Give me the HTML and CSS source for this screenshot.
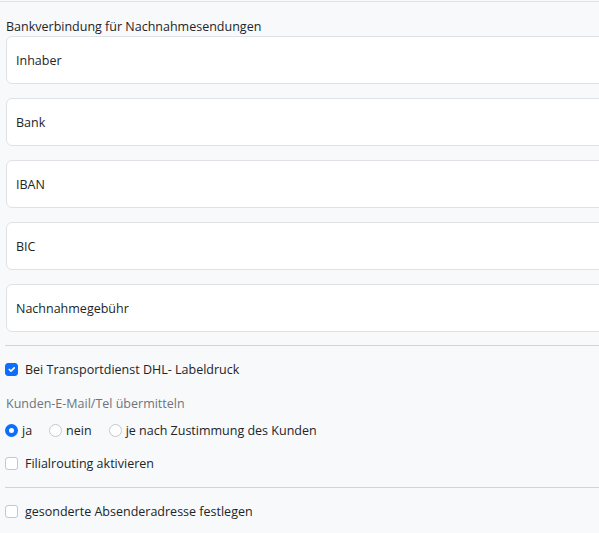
FILE: index.html
```
<!DOCTYPE html>
<html lang="de">
<head>
    <meta charset="UTF-8">
    <meta name="viewport" content="width=device-width, initial-scale=1.0">
    <title>Versandeinstellungen</title>
    <link rel="stylesheet" href="styles.css">
</head>
<body>
    <div class="panel">
        <div class="title">Bankverbindung für Nachnahmesendungen</div>
        <div class="field"><input type="text" placeholder="Inhaber"></div>
        <div class="field"><input type="text" placeholder="Bank"></div>
        <div class="field"><input type="text" placeholder="IBAN"></div>
        <div class="field"><input type="text" placeholder="BIC"></div>
        <div class="field last"><input type="text" placeholder="Nachnahmegebühr"></div>

        <hr>

        <label class="check first">
            <input type="checkbox" checked>
            <span>Bei Transportdienst DHL- Labeldruck</span>
        </label>

        <div class="muted">Kunden-E-Mail/Tel übermitteln</div>
        <div class="radios">
            <label class="check"><input type="radio" name="kontakt" checked><span>ja</span></label>
            <label class="check"><input type="radio" name="kontakt"><span>nein</span></label>
            <label class="check"><input type="radio" name="kontakt"><span>je nach Zustimmung des Kunden</span></label>
        </div>

        <label class="check routing">
            <input type="checkbox">
            <span>Filialrouting aktivieren</span>
        </label>

        <hr>

        <label class="check first">
            <input type="checkbox">
            <span>gesonderte Absenderadresse festlegen</span>
        </label>
    </div>
</body>
</html>
```

FILE: styles.css
```
:root {
    --bg-color: #f8f9fa;
    --border-color: #dee2e6;
    --text-color: #212529;
    --muted-color: #6c757d;
    --accent-color: #0d6efd;
}
body {
    font-family: 'Open Sans', sans-serif;
    font-size: 12.5px;
    margin: 0;
    color: var(--text-color);
    background: var(--bg-color);
    overflow: hidden;
}
.panel {
    margin-top: 1px;
    padding: 14px 0 0 6px;
    border-top: 1px solid var(--border-color);
    overflow: hidden;
}
.title {
    padding-top: 2px;
    line-height: 18px;
}
.field {
    margin-right: -30px;
    margin-bottom: 14px;
}
.field.last {
    margin-bottom: 13px;
}
.field input {
    display: block;
    box-sizing: border-box;
    width: 100%;
    height: 48px;
    padding: 0 9px;
    background: #fff;
    border: 1px solid var(--border-color);
    border-radius: 6px;
    font-family: inherit;
    font-size: 12.5px;
    color: var(--text-color);
}
.field input::placeholder {
    color: var(--text-color);
}
hr {
    margin: 0 0 13px -1px;
    border: none;
    border-top: 1px solid #ced4da;
}
.check {
    display: flex;
    align-items: center;
    gap: 7px;
}
.check span {
    padding-top: 2px;
    line-height: 18px;
}
.check input {
    appearance: none;
    margin: 0;
    width: 13px;
    height: 13px;
    background: #fff;
    border: 1px solid #c4c8cc;
    border-radius: 3px;
    flex-shrink: 0;
}
.check input[type="radio"] {
    border-radius: 50%;
}
.check input[type="checkbox"]:checked {
    background: var(--accent-color) url("data:image/svg+xml,%3csvg xmlns='http://www.w3.org/2000/svg' viewBox='0 0 20 20'%3e%3cpath fill='none' stroke='%23fff' stroke-linecap='round' stroke-linejoin='round' stroke-width='3' d='M6 10l3 3l6-6'/%3e%3c/svg%3e") center/100% no-repeat;
    border-color: var(--accent-color);
}
.check input[type="radio"]:checked {
    background: #fff;
    border: 4px solid var(--accent-color);
}
.check.first {
    margin-left: -1px;
}
.muted {
    margin-top: 14px;
    padding-top: 2px;
    line-height: 18px;
    color: var(--muted-color);
}
.radios {
    display: flex;
    gap: 17px;
    margin: 7px 0 13px -1px;
}
.radios .check {
    gap: 4px;
}
.routing {
    margin: 0 0 14px -1px;
}
```
